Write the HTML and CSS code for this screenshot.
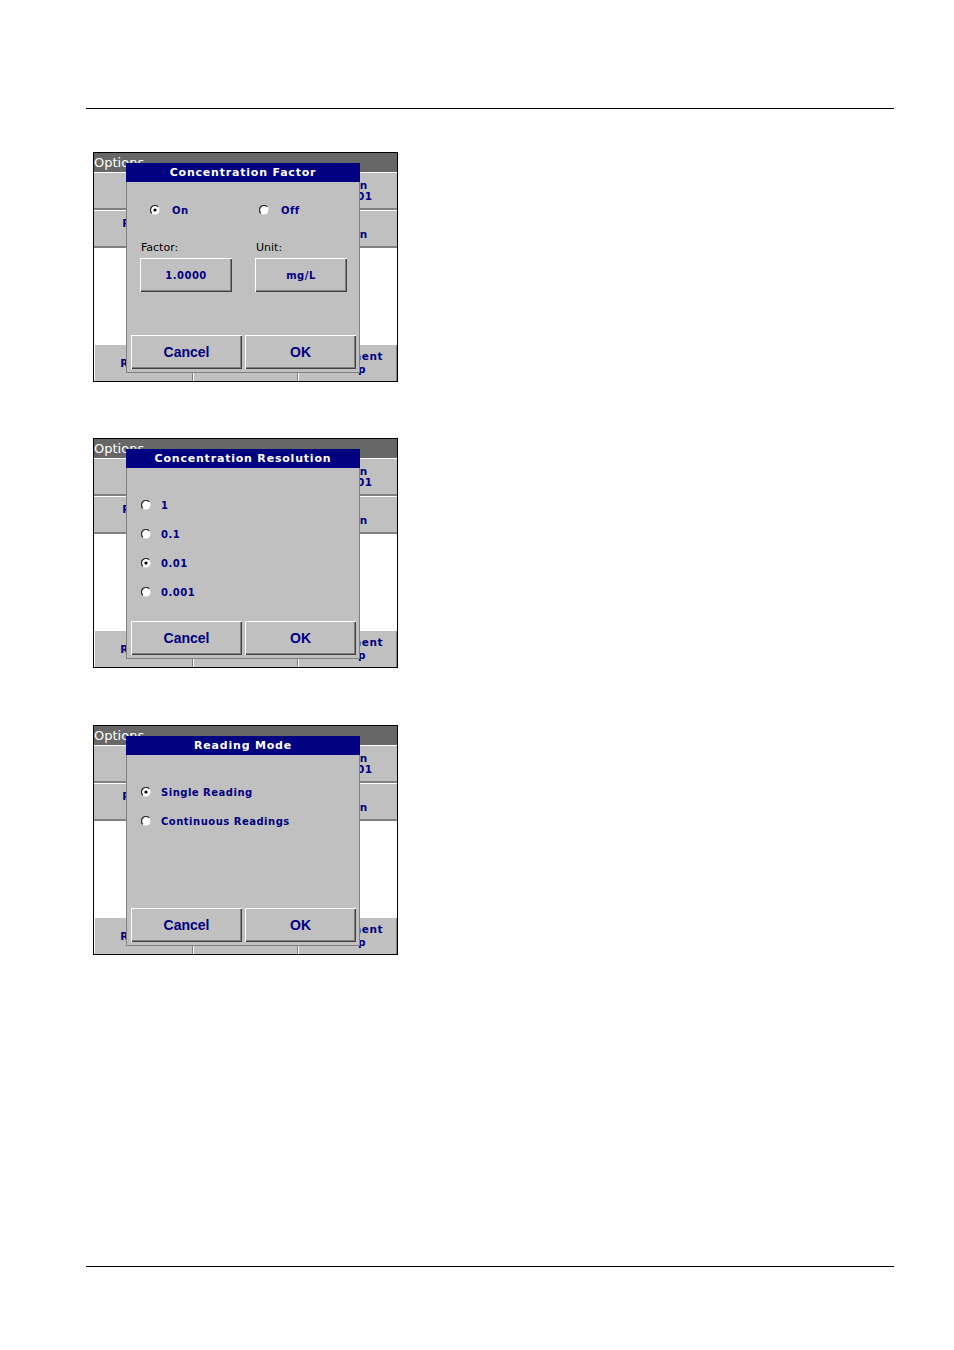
FILE: index.html
```html
<!DOCTYPE html>
<html>
<head>
<meta charset="utf-8">
<title>Options dialogs</title>
<link rel="stylesheet" href="styles.css">
</head>
<body>
<div class="page">
  <div class="rule"></div>
  <div class="shots">

    <div class="shot">
      <div class="s-title">Options</div>
      <div class="s-row">
        <div class="cell cell-left">Chemical<br>Form</div>
        <div class="cell">Concentration<br>Resolution 0.01</div>
      </div>
      <div class="s-row">
        <div class="cell cell-left">Reagent Blank<br>Off</div>
        <div class="cell">Factor<br>Concentration</div>
      </div>
      <div class="s-blank"></div>
      <div class="s-bottom">
        <div class="bcell bcell-left">Return</div>
        <div class="bcell bcell-mid">Timer</div>
        <div class="bcell">Instrument<br>Setup</div>
      </div>
      <div class="dlg">
        <div class="dlg-title">Concentration Factor</div>
        <div class="dlg-body">
          <div class="cf-radios">
            <div class="radio radio-wide cf-first">
              <svg class="rd" viewBox="0 0 10 10"><circle cx="5" cy="5" r="4.5" fill="#fff"/><path d="M1.8 8.2 A4.5 4.5 0 0 1 8.2 1.8" fill="none" stroke="#303030" stroke-width="1.3"/><circle cx="5" cy="5" r="1.6" fill="#000"/></svg>
              <span>On</span>
            </div>
            <div class="radio radio-wide">
              <svg class="rd" viewBox="0 0 10 10"><circle cx="5" cy="5" r="4.5" fill="#fff"/><path d="M1.8 8.2 A4.5 4.5 0 0 1 8.2 1.8" fill="none" stroke="#303030" stroke-width="1.3"/></svg>
              <span>Off</span>
            </div>
          </div>
          <div class="cf-fields">
            <div class="field">
              <div class="field-label">Factor:</div>
              <div class="vbtn">1.0000</div>
            </div>
            <div class="field">
              <div class="field-label">Unit:</div>
              <div class="vbtn">mg/L</div>
            </div>
          </div>
          <div class="dlg-actions">
            <div class="abtn">Cancel</div>
            <div class="abtn">OK</div>
          </div>
        </div>
      </div>
    </div>

    <div class="shot">
      <div class="s-title">Options</div>
      <div class="s-row">
        <div class="cell cell-left">Chemical<br>Form</div>
        <div class="cell">Concentration<br>Resolution 0.01</div>
      </div>
      <div class="s-row">
        <div class="cell cell-left">Reagent Blank<br>Off</div>
        <div class="cell">Factor<br>Concentration</div>
      </div>
      <div class="s-blank"></div>
      <div class="s-bottom">
        <div class="bcell bcell-left">Return</div>
        <div class="bcell bcell-mid">Timer</div>
        <div class="bcell">Instrument<br>Setup</div>
      </div>
      <div class="dlg">
        <div class="dlg-title">Concentration Resolution</div>
        <div class="dlg-body">
          <div class="rlist">
            <div class="radio">
              <svg class="rd" viewBox="0 0 10 10"><circle cx="5" cy="5" r="4.5" fill="#fff"/><path d="M1.8 8.2 A4.5 4.5 0 0 1 8.2 1.8" fill="none" stroke="#303030" stroke-width="1.3"/></svg>
              <span>1</span>
            </div>
            <div class="radio">
              <svg class="rd" viewBox="0 0 10 10"><circle cx="5" cy="5" r="4.5" fill="#fff"/><path d="M1.8 8.2 A4.5 4.5 0 0 1 8.2 1.8" fill="none" stroke="#303030" stroke-width="1.3"/></svg>
              <span>0.1</span>
            </div>
            <div class="radio">
              <svg class="rd" viewBox="0 0 10 10"><circle cx="5" cy="5" r="4.5" fill="#fff"/><path d="M1.8 8.2 A4.5 4.5 0 0 1 8.2 1.8" fill="none" stroke="#303030" stroke-width="1.3"/><circle cx="5" cy="5" r="1.6" fill="#000"/></svg>
              <span>0.01</span>
            </div>
            <div class="radio">
              <svg class="rd" viewBox="0 0 10 10"><circle cx="5" cy="5" r="4.5" fill="#fff"/><path d="M1.8 8.2 A4.5 4.5 0 0 1 8.2 1.8" fill="none" stroke="#303030" stroke-width="1.3"/></svg>
              <span>0.001</span>
            </div>
          </div>
          <div class="dlg-actions">
            <div class="abtn">Cancel</div>
            <div class="abtn">OK</div>
          </div>
        </div>
      </div>
    </div>

    <div class="shot shot-last">
      <div class="s-title">Options</div>
      <div class="s-row">
        <div class="cell cell-left">Chemical<br>Form</div>
        <div class="cell">Concentration<br>Resolution 0.01</div>
      </div>
      <div class="s-row">
        <div class="cell cell-left">Reagent Blank<br>Off</div>
        <div class="cell">Factor<br>Concentration</div>
      </div>
      <div class="s-blank"></div>
      <div class="s-bottom">
        <div class="bcell bcell-left">Return</div>
        <div class="bcell bcell-mid">Timer</div>
        <div class="bcell">Instrument<br>Setup</div>
      </div>
      <div class="dlg">
        <div class="dlg-title">Reading Mode</div>
        <div class="dlg-body">
          <div class="rlist">
            <div class="radio">
              <svg class="rd" viewBox="0 0 10 10"><circle cx="5" cy="5" r="4.5" fill="#fff"/><path d="M1.8 8.2 A4.5 4.5 0 0 1 8.2 1.8" fill="none" stroke="#303030" stroke-width="1.3"/><circle cx="5" cy="5" r="1.6" fill="#000"/></svg>
              <span>Single Reading</span>
            </div>
            <div class="radio">
              <svg class="rd" viewBox="0 0 10 10"><circle cx="5" cy="5" r="4.5" fill="#fff"/><path d="M1.8 8.2 A4.5 4.5 0 0 1 8.2 1.8" fill="none" stroke="#303030" stroke-width="1.3"/></svg>
              <span>Continuous Readings</span>
            </div>
          </div>
          <div class="dlg-actions">
            <div class="abtn">Cancel</div>
            <div class="abtn">OK</div>
          </div>
        </div>
      </div>
    </div>

  </div>
  <div class="rule rule-bottom"></div>
</div>
</body>
</html>
```

FILE: styles.css
```css
html, body {
  margin: 0;
  padding: 0;
  background: #fff;
}

body {
  font-family: "DejaVu Sans", sans-serif;
}

.page {
  margin-left: 86px;
  width: 808px;
  padding-top: 108px;
}

.rule {
  height: 1px;
  background: #000;
}

.rule-bottom {
  margin-top: 311px;
}

.shots {
  display: flex;
  flex-direction: column;
  padding-left: 7px;
}

.shot {
  position: relative;
  width: 305px;
  height: 230px;
  box-sizing: border-box;
  border: 1px solid #000;
  background: #fff;
  display: flex;
  flex-direction: column;
  overflow: hidden;
  margin-top: 56px;
}

.shot:first-child {
  margin-top: 43px;
}

.shot-last {
  margin-top: 57px;
}

.s-title {
  height: 19px;
  line-height: 19px;
  background: #676767;
  color: #ffffff;
  font-family: "DejaVu Sans", sans-serif;
  font-size: 13px;
  white-space: nowrap;
}

.s-row {
  display: flex;
  height: 38px;
}

.cell {
  flex: 1;
  background: #c0c0c0;
  box-shadow: inset 0 1px #fff, inset 0 -2px #808080;
  display: flex;
  align-items: center;
  justify-content: center;
  text-align: center;
  color: #000080;
  font-family: "DejaVu Sans", sans-serif;
  font-weight: bold;
  font-size: 10.5px;
  letter-spacing: 0.5px;
  line-height: 11px;
  white-space: nowrap;
}

.cell-left {
  padding-right: 5px;
}

.s-blank {
  flex: 1;
  background: #fff;
}

.s-bottom {
  display: flex;
  height: 36px;
}

.bcell {
  width: 99px;
  box-sizing: border-box;
  background: #c0c0c0;
  box-shadow: inset 1px 0 #fff, inset -1px 0 #808080;
  display: flex;
  align-items: center;
  justify-content: center;
  text-align: center;
  color: #000080;
  font-family: "DejaVu Sans", sans-serif;
  font-weight: bold;
  font-size: 10.5px;
  letter-spacing: 0.5px;
  line-height: 13px;
  white-space: nowrap;
}

.bcell-left {
  padding-right: 3px;
}

.bcell-mid {
  width: 105px;
}

/* dialog overlaying the options screen */
.dlg {
  position: absolute;
  left: 32px;
  top: 10px;
  width: 234px;
  height: 210px;
  display: flex;
  flex-direction: column;
}

.dlg-title {
  height: 19px;
  line-height: 19px;
  background: #000080;
  color: #fff;
  font-family: "DejaVu Sans", sans-serif;
  font-weight: bold;
  font-size: 11px;
  letter-spacing: 0.8px;
  text-align: center;
  white-space: nowrap;
}

.dlg-body {
  flex: 1;
  background: #c0c0c0;
  border: 1px solid #808080;
  border-top: 0;
  display: flex;
  flex-direction: column;
}

.radio {
  display: flex;
  align-items: center;
  gap: 10px;
  height: 12px;
  color: #000080;
  font-family: "DejaVu Sans", sans-serif;
  font-weight: bold;
  font-size: 10px;
  letter-spacing: 0.5px;
  white-space: nowrap;
}

.radio-wide {
  gap: 12px;
}

.rd {
  width: 10px;
  height: 10px;
  flex: none;
}

.cf-radios {
  display: flex;
  margin-top: 22px;
  padding-left: 23px;
}

.cf-first {
  width: 109px;
}

.cf-fields {
  display: grid;
  grid-template-columns: 115px 92px;
  padding-left: 13px;
  margin-top: 25px;
}

.field {
  display: flex;
  flex-direction: column;
  gap: 4px;
}

.field-label {
  padding-left: 1px;
  height: 13px;
  line-height: 13px;
  font-family: "DejaVu Sans", sans-serif;
  font-size: 11px;
  color: #000;
}

.vbtn {
  width: 92px;
  height: 34px;
  box-sizing: border-box;
  background: #c0c0c0;
  box-shadow: inset 1px 1px #fff, inset -1px -1px #404040, inset -2px -2px #808080;
  display: flex;
  align-items: center;
  justify-content: center;
  color: #000080;
  font-family: "DejaVu Sans", sans-serif;
  font-weight: bold;
  font-size: 10px;
  letter-spacing: 0.5px;
}

.rlist {
  display: flex;
  flex-direction: column;
  gap: 17px;
  margin-top: 31px;
  padding-left: 14px;
}

.dlg-actions {
  margin-top: auto;
  display: flex;
  gap: 3px;
  padding: 0 0 3px 4px;
}

.abtn {
  width: 111px;
  height: 34px;
  box-sizing: border-box;
  background: #c0c0c0;
  box-shadow: inset 1px 1px #fff, inset -1px -1px #404040, inset -2px -2px #808080;
  display: flex;
  align-items: center;
  justify-content: center;
  color: #000080;
  font-family: "Liberation Sans", Arial, sans-serif;
  font-weight: bold;
  font-size: 14px;
}
```
